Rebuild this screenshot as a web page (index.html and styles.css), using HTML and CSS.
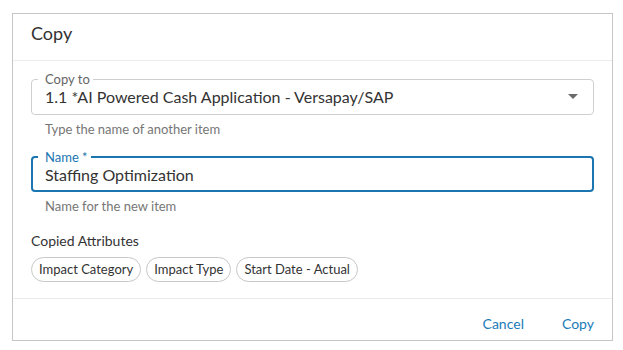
FILE: index.html
```html
<!DOCTYPE html>
<html>
<head>
<meta charset="utf-8">
<link rel="stylesheet" href="styles.css">
</head>
<body>
<div class="dialog">
  <div class="header"><h1 class="title">Copy</h1></div>
  <div class="body">
    <fieldset class="field">
      <legend class="label">Copy to</legend>
      <div class="row">
        <span class="value">1.1 *AI Powered Cash Application - Versapay/SAP</span>
        <svg class="arrow" width="10" height="5" viewBox="0 0 10 5"><path d="M0 0h10L5 5z" fill="#6b6b6b"/></svg>
      </div>
    </fieldset>
    <div class="helper">Type the name of another item</div>
    <fieldset class="field focused">
      <legend class="label">Name *</legend>
      <div class="row"><span class="value">Staffing Optimization</span></div>
    </fieldset>
    <div class="helper">Name for the new item</div>
    <div class="section">Copied Attributes</div>
    <div class="chips">
      <span class="chip">Impact Category</span>
      <span class="chip">Impact Type</span>
      <span class="chip">Start Date - Actual</span>
    </div>
  </div>
  <div class="footer">
    <button class="btn">Cancel</button>
    <button class="btn">Copy</button>
  </div>
</div>
</body>
</html>
```
FILE: styles.css
```css
* { box-sizing: border-box; }
html, body { margin: 0; background: #fff; }
body {
  padding: 13px 10px 0 12px;
  font-family: Lato, "Open Sans", sans-serif;
  color: #333;
}
.dialog {
  width: 601px;
  height: 328px;
  border: 1px solid #c6c6c6;
  display: flex;
  flex-direction: column;
}
.header {
  height: 47px;
  border-bottom: 1px solid #ececec;
  padding: 8px 18px 0;
}
.title {
  margin: 0;
  font-size: 18px;
  font-weight: 400;
  line-height: 22px;
}
.body {
  flex: 1;
  padding: 11px 18px 0 18px;
}
.field {
  margin: 0;
  padding: 0 13px;
  border: 1px solid #cfcfcf;
  border-radius: 4px;
  min-width: 0;
}
.label {
  margin-left: -7px;
  padding: 0 3px 0 7px;
  font-size: 13px;
  line-height: 14px;
  color: #666;
}
.row {
  display: flex;
  align-items: center;
  justify-content: space-between;
  height: 28px;
  padding-bottom: 7px;
}
.value {
  font-size: 16px;
  line-height: 18px;
  color: #333;
}
.arrow { margin-right: 2px; }
.focused {
  border: 2px solid #1a75b1;
  padding: 0 12px;
  margin-top: 13px;
}
.focused .label { color: #1a75b1; margin-left: -7px; }
.focused .row { height: 26px; padding: 1px 0 6px; }
.helper {
  margin-top: 6px;
  padding-left: 14px;
  font-size: 13px;
  line-height: 16px;
  color: #767676;
}
.section {
  margin-top: 19px;
  font-size: 14px;
  line-height: 16px;
  color: #333;
}
.chips {
  margin-top: 8px;
  display: flex;
  gap: 5px;
}
.chip {
  height: 25px;
  border: 1px solid #c8c8c8;
  border-radius: 13px;
  padding: 0 7px;
  font-size: 13px;
  line-height: 23px;
  color: #333;
}
.footer {
  height: 42px;
  border-top: 1px solid #ececec;
  display: flex;
  justify-content: flex-end;
  align-items: center;
  gap: 38px;
  padding: 8px 18px 0 0;
}
.btn {
  background: none;
  border: 0;
  padding: 0;
  font-family: inherit;
  font-size: 14px;
  color: #1a7ab8;
  cursor: pointer;
}
```
